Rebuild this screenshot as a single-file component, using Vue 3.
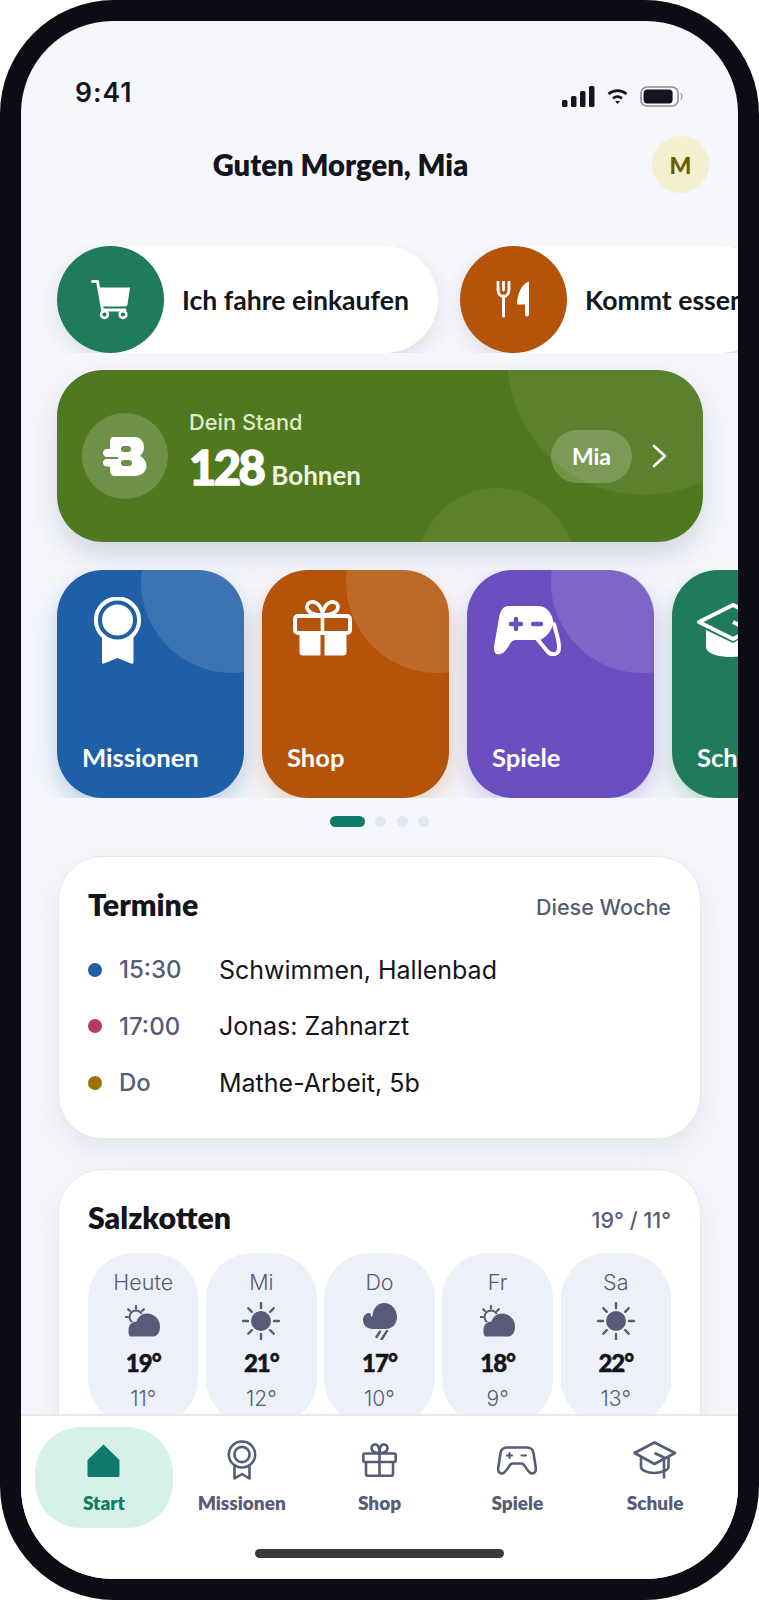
<script setup>
const quick = [
  { label: "Ich fahre einkaufen", color: "#207a5c", icon: "cart" },
  { label: "Kommt essen", color: "#b45309", icon: "food" },
];

const tiles = [
  { label: "Missionen", color: "#1f5fa8", shadow: "rgba(31, 95, 168, 0.28)", icon: "medal" },
  { label: "Shop", color: "#b45309", shadow: "rgba(180, 83, 9, 0.24)", icon: "gift" },
  { label: "Spiele", color: "#6b4fc0", shadow: "rgba(107, 79, 192, 0.28)", icon: "game" },
  { label: "Schule", color: "#207a5c", shadow: "rgba(32, 122, 92, 0.26)", icon: "cap" },
];

const events = [
  { time: "15:30", text: "Schwimmen, Hallenbad", color: "#1f5fa8" },
  { time: "17:00", text: "Jonas: Zahnarzt", color: "#b83a64" },
  { time: "Do", text: "Mathe-Arbeit, 5b", color: "#9a7408" },
];

const days = [
  { name: "Heute", icon: "cloudsun", high: "19°", low: "11°" },
  { name: "Mi", icon: "sun", high: "21°", low: "12°" },
  { name: "Do", icon: "rain", high: "17°", low: "10°" },
  { name: "Fr", icon: "cloudsun", high: "18°", low: "9°" },
  { name: "Sa", icon: "sun", high: "22°", low: "13°" },
];

const tabs = [
  { label: "Start", icon: "home", active: true },
  { label: "Missionen", icon: "medal" },
  { label: "Shop", icon: "gift" },
  { label: "Spiele", icon: "game" },
  { label: "Schule", icon: "cap" },
];

const rays = [0, 45, 90, 135, 180, 225, 270, 315];
</script>

<template>
  <div class="phone">
    <div class="screen">
      <div class="status">
        <span class="clock">9:41</span>
        <div class="status-icons">
          <svg width="33" height="21" viewBox="0 0 33 21" fill="#14151c">
            <rect x="0" y="14" width="5.5" height="7" rx="1.5" />
            <rect x="9" y="10" width="5.5" height="11" rx="1.5" />
            <rect x="18" y="5" width="5.5" height="16" rx="1.5" />
            <rect x="27" y="0" width="5.5" height="21" rx="1.5" />
          </svg>
          <svg width="21" height="15" viewBox="0 0 21 15" fill="none" stroke="#14151c" stroke-width="2.8">
            <path d="M1.5 5 C7 0.5 14 0.5 19.5 5" />
            <path d="M6 9.3 C8.7 7.3 12.3 7.3 15 9.3" />
            <path d="M8 12 L10.5 15 L13 12 Z" fill="#14151c" stroke="none" />
          </svg>
          <svg width="43" height="21" viewBox="0 0 43 21">
            <rect x="1" y="1" width="37" height="19" rx="6" fill="none" stroke="#8f9096" stroke-width="1.6" />
            <rect x="3.6" y="3.6" width="29" height="13.8" rx="3.6" fill="#14151c" />
            <path d="M40.5 7.5 C42.3 8.2 42.3 12.8 40.5 13.5" fill="none" stroke="#a5a6ac" stroke-width="1.4" />
          </svg>
        </div>
      </div>

      <div class="header">
        <h1 class="greeting">Guten Morgen, Mia</h1>
        <div class="avatar">M</div>
      </div>

      <div class="content">
        <div class="quick-rail">
          <div v-for="q in quick" :key="q.label" class="quick-pill">
            <div class="quick-circle" :style="{ background: q.color }">
              <svg v-if="q.icon === 'cart'" width="40" height="40" viewBox="0 0 40 40" fill="#fff">
                <path d="M1.5 1.5 H6.5 L11.5 30 H34" fill="none" stroke="#fff" stroke-width="2.8" stroke-linecap="round" stroke-linejoin="round" />
                <path d="M8 7.5 H39 L36.5 24.5 Q36 26.5 34 26.5 H11.5 Z" />
                <circle cx="13.5" cy="34.5" r="3.4" fill="none" stroke="#fff" stroke-width="2.6" />
                <circle cx="32" cy="34.5" r="3.4" fill="none" stroke="#fff" stroke-width="2.6" />
              </svg>
              <svg v-else width="34" height="37" viewBox="0 0 34 37" fill="#fff">
                <path d="M2 1 V9 M7.5 1 V9 M13 1 V9" stroke="#fff" stroke-width="2.8" stroke-linecap="round" />
                <path d="M2 8 C2 13 4.5 15.5 7.5 15.5 S13 13 13 8" fill="none" stroke="#fff" stroke-width="2.8" />
                <path d="M7.5 15 V35" stroke="#fff" stroke-width="3" stroke-linecap="round" />
                <path d="M32.5 0.5 C26 3 21 13 21 23.5 H29 V33.5 A1.8 1.8 0 0 0 33 33.5 V1 Z" />
              </svg>
            </div>
            <span class="quick-label">{{ q.label }}</span>
          </div>
        </div>

        <div class="balance">
          <div class="bean-circle">
            <svg width="44" height="39" viewBox="0 0 44 39" fill="#fff" fill-rule="evenodd">
              <path d="M10 0 H31 C38 0 41 5 41 10 C41 14 39.5 17 37 19 C41 21 43.5 25 43.5 29 C43.5 35 38 39 31 39 H12 C9 39 7 37 7 34 V29.5 H4 C1 29.5 0 27.5 0 25.5 C0 23.5 1.5 22 4 22 H15 V20 H4 C1.5 20 0 18 0 16 C0 14 1.5 12 4 12 H7 V5 C7 2 8 0 10 0 Z M21 9 H25 A3 3 0 0 1 25 15 H21 A3 3 0 0 1 21 9 Z M21 23 H26 A3 3 0 0 1 26 29 H21 A3 3 0 0 1 21 23 Z" />
            </svg>
          </div>
          <div class="balance-text">
            <span class="balance-caption">Dein Stand</span>
            <div class="balance-line">
              <span class="balance-num">128</span>
              <span class="balance-unit">Bohnen</span>
            </div>
          </div>
          <div class="balance-who">Mia</div>
          <svg class="balance-arrow" width="15" height="24" viewBox="0 0 15 24" fill="none" stroke="#fff" stroke-width="2.6" stroke-linecap="round" stroke-linejoin="round">
            <path d="M2 2 L13 12 L2 22" />
          </svg>
        </div>

        <div class="tile-rail">
          <div
            v-for="t in tiles"
            :key="t.label"
            class="tile"
            :style="{ background: t.color, boxShadow: '0 10px 24px ' + t.shadow }"
          >
            <div class="tile-icon">
              <svg v-if="t.icon === 'medal'" width="50" height="68" viewBox="0 0 50 68" fill="#fff">
                <circle cx="24.5" cy="23" r="21.6" fill="none" stroke="#fff" stroke-width="4" />
                <circle cx="24.5" cy="23" r="15.5" />
                <path d="M9 38 Q24.5 48 40.5 38 V65 Q40.5 67.5 38 66.5 L24.5 61 L11 66.5 Q9 67.5 9 65 Z" />
              </svg>
              <svg v-else-if="t.icon === 'gift'" width="60" height="62" viewBox="0 0 60 62" fill="#fff">
                <path d="M29.5 15 C20 15 14 12 14 7 C14 3 18 1.5 21 2 C26 3 29.5 10 29.5 15 C29.5 10 33 3 38 2 C41 1.5 45 3 45 7 C45 12 39 15 29.5 15 Z" fill="none" stroke="#fff" stroke-width="3.6" />
                <rect x="2" y="16" width="55" height="17" rx="3" fill="none" stroke="#fff" stroke-width="4" />
                <path d="M29.5 16 V33" stroke="#fff" stroke-width="3.6" />
                <path d="M6.5 35 H27.5 V55.5 H10 Q6.5 55.5 6.5 52 Z" />
                <path d="M31.5 35 H53.5 V52 Q53.5 55.5 50 55.5 H31.5 Z" />
              </svg>
              <svg v-else-if="t.icon === 'game'" width="68" height="50" viewBox="0 0 68 50" fill="#fff">
                <path d="M14 0 H44 C52 0 57 6 59 14 C60 24 50 34 44 34 H22 C19 34 18 35 16 38 L12 44 C9 48 5 49 2.5 48 C0 47 -0.3 43 0.3 39 L5 12 C6 5 9 0 14 0 Z" />
                <path d="M44 34 L54 46 C57 49 62 49 64 46 C66 43 65 38 64 33 L60 18" fill="none" stroke="#fff" stroke-width="4" stroke-linecap="round" />
                <path d="M22 13 V23 M17 18 H27 M39 18 H47" fill="none" stroke="#6b4fc0" stroke-width="4.4" stroke-linecap="round" />
              </svg>
              <svg v-else width="72" height="56" viewBox="0 0 72 56" fill="#fff">
                <path d="M2 19 L36 2 L70 19 L36 36 Z" fill="none" stroke="#fff" stroke-width="4" stroke-linejoin="round" />
                <path d="M36 19 L52 27 V50" fill="none" stroke="#fff" stroke-width="4" />
                <path d="M9 27 L36 40 L58 27 V44 C58 50 46 54 34 54 C20 54 9 50 9 44 Z" />
              </svg>
            </div>
            <span class="tile-label">{{ t.label }}</span>
          </div>
        </div>

        <div class="dots">
          <span class="dot active"></span>
          <span class="dot"></span>
          <span class="dot"></span>
          <span class="dot"></span>
        </div>

        <section class="card agenda">
          <div class="card-head">
            <h2>Termine</h2>
            <span class="card-note">Diese Woche</span>
          </div>
          <div v-for="e in events" :key="e.text" class="event">
            <span class="event-dot" :style="{ background: e.color }"></span>
            <span class="event-time">{{ e.time }}</span>
            <span class="event-text">{{ e.text }}</span>
          </div>
        </section>

        <section class="card weather">
          <div class="card-head">
            <h2>Salzkotten</h2>
            <span class="card-note">19° / 11°</span>
          </div>
          <div class="days">
            <div v-for="d in days" :key="d.name" class="day">
              <span class="day-name">{{ d.name }}</span>
              <div class="day-icon">
                <svg v-if="d.icon === 'sun'" width="38" height="38" viewBox="0 0 38 38" fill="#565c78">
                  <circle cx="19" cy="19" r="10" />
                  <g v-for="r in rays" :key="r" :transform="'rotate(' + r + ' 19 19)'">
                    <path d="M19 1 V6" stroke="#565c78" stroke-width="2.4" stroke-linecap="round" />
                  </g>
                </svg>
                <svg v-else-if="d.icon === 'cloudsun'" width="36" height="34" viewBox="0 0 36 34" fill="none">
                  <circle cx="11" cy="13" r="6.5" stroke="#565c78" stroke-width="2" />
                  <path d="M11 2 V4.5 M3.2 5.2 L5 7 M18.8 5.2 L17 7 M0.5 13 H3" stroke="#565c78" stroke-width="2.2" stroke-linecap="round" />
                  <path d="M6 32.5 H28 C32.5 32.5 35 28 35 22.5 C35 15 29 9.5 22 9.5 C17 9.5 13 12.5 11.5 17.5 C7 17.5 3.5 21 3.5 26 C3.5 30 4 32.5 6 32.5 Z" fill="#565c78" stroke="#ecf0f9" stroke-width="1.6" paint-order="stroke" />
                </svg>
                <svg v-else width="36" height="38" viewBox="0 0 36 38" fill="#565c78">
                  <path d="M11 27 C5 27 1 23 1 18 C1 14 4 11 7 11 C8 11 9 12 9 14 C9 15 10 15 10.5 14 C11 6 16 1 22 1 C30 1 35 8 35 15 C35 22 30 27 24 27 Z" />
                  <path d="M18 29.5 L14.5 35 M25 29 L19.5 37.5" fill="none" stroke="#565c78" stroke-width="2.4" stroke-linecap="round" />
                </svg>
              </div>
              <span class="day-high">{{ d.high }}</span>
              <span class="day-low">{{ d.low }}</span>
            </div>
          </div>
        </section>
      </div>

      <nav class="tabbar">
        <div v-for="t in tabs" :key="t.label" class="tab" :class="{ active: t.active }">
          <div class="tab-icon">
            <svg v-if="t.icon === 'home'" width="33" height="33" viewBox="0 0 33 33" fill="#0f7a6c">
              <path d="M16.5 0.5 L32.5 16 V31.5 Q32.5 33 31 33 H2 Q0.5 33 0.5 31.5 V16 Z" />
            </svg>
            <svg v-else-if="t.icon === 'medal'" width="30" height="40" viewBox="0 0 30 40" fill="none" stroke="#565c78" stroke-width="2.6" stroke-linejoin="round">
              <ellipse cx="15" cy="14.5" rx="13.2" ry="13" />
              <circle cx="15" cy="14.5" r="7.6" />
              <path d="M7.5 25 V38.5 L15 34 L22.5 38.5 V25" />
            </svg>
            <svg v-else-if="t.icon === 'gift'" width="35" height="34" viewBox="0 0 35 34" fill="none" stroke="#565c78" stroke-width="2.6" stroke-linejoin="round">
              <path d="M17.5 10 C12 10 9.5 8 9.5 5 C9.5 2.5 12 1 14 1.6 C16 2.2 17.5 6 17.5 10 C17.5 6 19 2.2 21 1.6 C23 1 25.5 2.5 25.5 5 C25.5 8 23 10 17.5 10 Z" />
              <rect x="1.3" y="10.5" width="32.4" height="8.5" rx="1.5" />
              <path d="M4 19 V31 Q4 32.7 5.7 32.7 H29.3 Q31 32.7 31 31 V19" />
              <path d="M17.5 10.5 V32.7" />
            </svg>
            <svg v-else-if="t.icon === 'game'" width="40" height="29" viewBox="0 0 40 29" fill="none" stroke="#565c78" stroke-width="2.6" stroke-linejoin="round" stroke-linecap="round">
              <path d="M10 1.5 H30 C34 1.5 36 4 36.5 7 L38.8 22 C39.4 26 36.5 28.5 33.5 27 C31.5 26 29 22 27 19 C26.3 18 25.5 17.5 24 17.5 H16 C14.5 17.5 13.7 18 13 19 C11 22 8.5 26 6.5 27 C3.5 28.5 0.6 26 1.2 22 L3.5 7 C4 4 6 1.5 10 1.5 Z" />
              <path d="M12.5 7 V12 M10 9.5 H15 M24.5 9.5 H29" stroke-width="2.2" />
            </svg>
            <svg v-else width="44" height="38" viewBox="0 0 44 38" fill="none" stroke="#565c78" stroke-width="2.6" stroke-linejoin="round">
              <path d="M1.5 12 L21.5 1.5 L42 12 L21.5 23 Z" />
              <path d="M21.5 12 L31 16.5 V37.5" />
              <path d="M8 16.5 V26 C8 29 14 32 21.5 32 C28 32 35.5 29 35.5 26 V16" />
            </svg>
          </div>
          <span class="tab-label">{{ t.label }}</span>
        </div>
      </nav>

      <div class="home-bar-wrap">
        <div class="home-bar"></div>
      </div>
    </div>
  </div>
</template>

<style>
html,
body {
  margin: 0;
  background: #fff;
}
</style>

<style scoped>
.phone {
  width: 759px;
  height: 1600px;
  box-sizing: border-box;
  padding: 21px;
  background: #0b0c14;
  border-radius: 114px;
}

.screen {
  height: 100%;
  display: flex;
  flex-direction: column;
  overflow: hidden;
  background: #f6f7fc;
  border-radius: 92px;
  font-family: Inter, "Liberation Sans", sans-serif;
  color: #14151c;
}

.status {
  display: flex;
  justify-content: space-between;
  align-items: center;
  padding: 50px 55px 0 54px;
  height: 42px;
  flex-shrink: 0;
}

.clock {
  font-size: 26.5px;
  font-weight: 600;
  letter-spacing: 1px;
}

.status-icons {
  display: flex;
  align-items: center;
  gap: 12px;
  margin-top: 8px;
}

.header {
  display: flex;
  align-items: center;
  flex-shrink: 0;
  margin-top: 23px;
  padding: 0 29px 0 8px;
}

.greeting {
  flex: 1;
  margin: 0;
  text-align: center;
  font-family: Lato, sans-serif;
  font-size: 29.2px;
  font-weight: 800;
}

.avatar {
  width: 57px;
  height: 57px;
  border-radius: 50%;
  background: #f3efcf;
  color: #6b5a00;
  display: flex;
  align-items: center;
  justify-content: center;
  font-family: Lato, sans-serif;
  font-size: 23px;
  font-weight: 900;
}

.content {
  flex: 1;
  min-height: 0;
  overflow: hidden;
}

.quick-rail {
  display: flex;
  gap: 22px;
  margin-top: 53px;
  padding-left: 36px;
  height: 107px;
  overflow: hidden;
}

.quick-pill {
  display: flex;
  align-items: center;
  flex-shrink: 0;
  gap: 18px;
  padding-right: 29px;
  background: #fff;
  border-radius: 54px;
  box-shadow: 0 8px 20px rgba(40, 50, 90, 0.12);
}

.quick-circle {
  width: 107px;
  height: 107px;
  border-radius: 50%;
  display: flex;
  align-items: center;
  justify-content: center;
}

.quick-label {
  font-family: Lato, sans-serif;
  font-size: 26.6px;
  font-weight: 700;
  white-space: nowrap;
}

.balance {
  position: relative;
  display: flex;
  align-items: center;
  height: 172px;
  margin: 17px 35px 0 36px;
  padding: 0 24px 0 25px;
  box-sizing: border-box;
  overflow: hidden;
  background: #50781f;
  border-radius: 46px;
  box-shadow: 0 14px 28px rgba(40, 50, 90, 0.16);
}

.balance::before,
.balance::after {
  content: "";
  position: absolute;
  border-radius: 50%;
  background: rgba(255, 255, 255, 0.07);
}

.balance::before {
  width: 274px;
  height: 274px;
  left: 450px;
  top: -149px;
}

.balance::after {
  width: 157px;
  height: 157px;
  left: 361px;
  top: 118px;
}

.bean-circle {
  width: 86px;
  height: 86px;
  border-radius: 50%;
  flex-shrink: 0;
  background: rgba(255, 255, 255, 0.18);
  display: flex;
  align-items: center;
  justify-content: center;
}

.balance-text {
  flex: 1;
  margin: 0 0 10px 21px;
  display: flex;
  flex-direction: column;
}

.balance-caption {
  font-size: 21.8px;
  line-height: 24px;
  font-weight: 500;
  color: #dcebc8;
}

.balance-line {
  display: flex;
  align-items: baseline;
  gap: 8px;
  margin-top: 8px;
}

.balance-num {
  font-family: Lato, sans-serif;
  font-size: 47px;
  line-height: 50px;
  font-weight: 900;
  color: #fff;
  letter-spacing: -2.5px;
  -webkit-text-stroke: 1.4px #fff;
}

.balance-unit {
  font-family: Lato, sans-serif;
  font-size: 26px;
  font-weight: 700;
  color: #ecf3e0;
}

.balance-who {
  position: relative;
  width: 81px;
  height: 53px;
  border-radius: 27px;
  background: rgba(255, 255, 255, 0.2);
  color: #fff;
  font-family: Lato, sans-serif;
  font-size: 23px;
  font-weight: 700;
  display: flex;
  align-items: center;
  justify-content: center;
}

.balance-arrow {
  position: relative;
  margin-left: 20px;
  margin-right: 12px;
}

.tile-rail {
  display: flex;
  gap: 18px;
  margin-top: 28px;
  padding-left: 36px;
  height: 228px;
  overflow: hidden;
}

.tile {
  position: relative;
  flex: 0 0 187px;
  display: flex;
  flex-direction: column;
  justify-content: space-between;
  box-sizing: border-box;
  padding: 25px 0 26px 25px;
  overflow: hidden;
  border-radius: 46px;
}

.tile::before {
  content: "";
  position: absolute;
  width: 182px;
  height: 182px;
  top: -79px;
  right: -79px;
  border-radius: 50%;
  background: rgba(255, 255, 255, 0.13);
}

.tile-icon {
  position: relative;
  width: 72px;
  height: 72px;
  display: flex;
  align-items: center;
  justify-content: center;
}

.tile-label {
  position: relative;
  font-family: Lato, sans-serif;
  font-size: 25.6px;
  line-height: 30px;
  font-weight: 700;
  color: #fff;
  white-space: nowrap;
}

.dots {
  display: flex;
  justify-content: center;
  gap: 10.5px;
  margin-top: 18px;
}

.dot {
  width: 11px;
  height: 11px;
  border-radius: 50%;
  background: #e3e7f2;
}

.dot.active {
  width: 35px;
  border-radius: 6px;
  background: #0f7a6c;
}

.card {
  margin: 0 37px;
  box-sizing: border-box;
  padding: 28px 29px 0;
  background: #fff;
  border: 1px solid #e6e8ef;
  border-radius: 44px;
  box-shadow: 0 14px 28px rgba(40, 50, 90, 0.09);
}

.agenda {
  margin-top: 29px;
  height: 283px;
}

.weather {
  margin-top: 30px;
  height: 320px;
}

.card-head {
  display: flex;
  justify-content: space-between;
  align-items: center;
  height: 38px;
}

.agenda .card-head {
  margin-bottom: 18.5px;
}

.card-head h2 {
  margin: 0;
  font-family: Lato, sans-serif;
  font-size: 30.3px;
  font-weight: 800;
}

.card-note {
  margin-top: 5px;
  font-size: 21.5px;
  font-weight: 500;
  color: #565c78;
}

.event {
  display: flex;
  align-items: center;
  height: 56.5px;
}

.event-dot {
  width: 14px;
  height: 14px;
  border-radius: 50%;
  flex-shrink: 0;
}

.event-time {
  width: 100px;
  margin-left: 17px;
  font-size: 24px;
  font-weight: 500;
  color: #565c78;
}

.event-text {
  font-size: 25px;
  color: #14151c;
}

.days {
  display: flex;
  gap: 7.7px;
  margin-top: 17px;
}

.day {
  flex: 1;
  display: flex;
  flex-direction: column;
  align-items: center;
  height: 172px;
  background: #ecf0f9;
  border-radius: 46px;
}

.day-name {
  margin-top: 16px;
  font-size: 21.5px;
  line-height: 26px;
  font-weight: 300;
  color: #565c78;
}

.day-icon {
  display: flex;
  align-items: center;
  justify-content: center;
  height: 38px;
  margin-top: 7px;
}

.day-high {
  margin-top: 9px;
  font-family: Lato, sans-serif;
  font-size: 24px;
  line-height: 28px;
  font-weight: 900;
  letter-spacing: -1px;
  -webkit-text-stroke: 0.5px #14151c;
}

.day-low {
  margin-top: 9px;
  font-size: 21px;
  line-height: 26px;
  font-weight: 300;
  color: #565c78;
}

.tabbar {
  display: flex;
  flex-shrink: 0;
  position: relative;
  padding: 11px 14px 0;
  height: 111px;
  background: #fff;
  border-top: 2px solid #e6e8f0;
}

.tab {
  flex: 1;
  height: 101px;
  display: flex;
  flex-direction: column;
  align-items: center;
  border-radius: 46px;
}

.tab.active {
  background: #d6f2e8;
}

.tab-icon {
  height: 42px;
  margin-top: 12px;
  display: flex;
  align-items: center;
  justify-content: center;
}

.tab-label {
  margin-top: 10px;
  font-family: Lato, sans-serif;
  font-size: 19px;
  line-height: 24px;
  font-weight: 800;
  color: #565c78;
}

.tab.active .tab-label {
  color: #0f7a66;
}

.home-bar-wrap {
  display: flex;
  justify-content: center;
  height: 41px;
  background: #fff;
  flex-shrink: 0;
}

.home-bar {
  width: 249px;
  height: 9px;
  margin-top: 11px;
  border-radius: 5px;
  background: #3a3a3c;
}
</style>
